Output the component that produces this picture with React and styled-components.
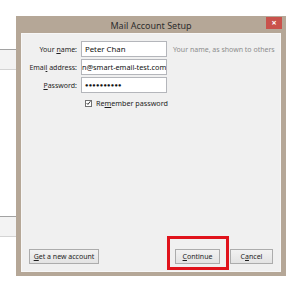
import React from "react";
import styled, { createGlobalStyle } from "styled-components";

const GlobalStyle = createGlobalStyle`
  html, body {
    margin: 0;
    padding: 0;
    background: #ffffff;
  }
  body {
    font-family: "Noto Sans", "Open Sans", sans-serif;
  }
`;

const Page = styled.div`
  width: 300px;
  height: 291px;
  display: flex;
  padding-top: 16px;
  box-sizing: border-box;
  overflow: hidden;
`;

const Behind = styled.div`
  width: 16px;
  display: flex;
  flex-direction: column;
  padding-top: 33px;
  gap: 146px;
`;

const RemnantField = styled.div`
  height: 21px;
  box-sizing: border-box;
  border-top: 1px solid #a2a2a2;
  border-bottom: 1px solid #d4d4d4;
  background: #f3f3f3;
`;

const Window = styled.div`
  width: 270px;
  height: 260px;
  box-sizing: border-box;
  background: #b5a797;
  padding: 0 5px 4px;
  display: flex;
  flex-direction: column;
`;

const TitleBar = styled.div`
  height: 17px;
  display: grid;
  grid-template-columns: 1fr auto 1fr;
  align-items: center;
`;

const Title = styled.div`
  grid-column: 2;
  font-size: 9px;
  color: #2e2e2e;
  padding-top: 1px;
`;

const CloseButton = styled.div`
  grid-column: 3;
  justify-self: end;
  align-self: start;
  margin-top: 1px;
  margin-right: -1px;
  width: 16px;
  height: 12px;
  background: #c9524c;
  color: #ffffff;
  font-size: 9px;
  font-weight: bold;
  line-height: 12px;
  text-align: center;
`;

const Content = styled.div`
  flex: 1;
  background: #f0f0f0;
  border: 1px solid #f7f7f7;
  box-sizing: border-box;
  padding: 7px 7px 7px;
  display: flex;
  flex-direction: column;
  justify-content: space-between;
`;

const Form = styled.div`
  display: grid;
  grid-template-columns: 48px 86px auto;
  grid-auto-rows: 16px;
  row-gap: 2px;
  column-gap: 4px;
  align-items: center;
`;

const Label = styled.div`
  font-size: 7px;
  color: #1e1e1e;
  text-align: right;
  white-space: nowrap;
`;

const Key = styled.span`
  text-decoration: underline;
`;

const Field = styled.div`
  height: 16px;
  box-sizing: border-box;
  background: #ffffff;
  border: 1px solid #b4b6bb;
  display: flex;
  align-items: center;
  padding: 0 3px;
  overflow: hidden;
  font-size: ${(p) => (p.$secret ? "5.6px" : "7.8px")};
  letter-spacing: ${(p) => (p.$secret ? "0.3px" : "0")};
  color: #111;
  white-space: nowrap;
`;

const Scrolled = styled.span`
  margin-left: -3px;
  font-size: 7.3px;
`;

const Hint = styled.div`
  padding-left: 2px;
  font-size: 7px;
  color: #8c8c8c;
  white-space: nowrap;
`;

const CheckRow = styled.label`
  grid-column: 2 / span 2;
  display: flex;
  align-items: center;
  gap: 4px;
  height: 13px;
  padding-left: 4px;
  font-size: 7.2px;
  color: #1e1e1e;
  white-space: nowrap;
`;

const Box = styled.span`
  width: 7px;
  height: 7px;
  box-sizing: border-box;
  border: 1px solid #707070;
  background: #fff;
  display: flex;
  align-items: center;
  justify-content: center;
`;

const ButtonBar = styled.div`
  display: flex;
  align-items: center;
`;

const Button = styled.div`
  height: 15px;
  box-sizing: border-box;
  width: ${(p) => p.$width}px;
  margin-left: ${(p) => p.$gap || 0}px;
  border: 1px solid #acacac;
  background: linear-gradient(#f2f2f2, #e3e3e3);
  font-size: 7px;
  color: #1e1e1e;
  display: flex;
  align-items: center;
  justify-content: center;
  white-space: nowrap;
`;

const Spacer = styled.div`
  flex: 1;
`;

const Marked = styled.div`
  position: relative;
`;

const Highlight = styled.div`
  position: absolute;
  left: -8px;
  top: -13px;
  width: 62px;
  height: 34px;
  box-sizing: border-box;
  border: 3px solid #e0131b;
  pointer-events: none;
`;

export default function App() {
  return (
    <>
      <GlobalStyle />
      <Page>
        <Behind>
          <RemnantField />
          <RemnantField />
        </Behind>
        <Window>
          <TitleBar>
            <Title>Mail Account Setup</Title>
            <CloseButton>×</CloseButton>
          </TitleBar>
          <Content>
            <Form>
              <Label>
                Your <Key>n</Key>ame:
              </Label>
              <Field>Peter Chan</Field>
              <Hint>Your name, as shown to others</Hint>

              <Label>
                Emai<Key>l</Key> address:
              </Label>
              <Field>
                <Scrolled>n@smart-email-test.com</Scrolled>
              </Field>
              <div />

              <Label>
                <Key>P</Key>assword:
              </Label>
              <Field $secret>●●●●●●●●●●</Field>
              <div />

              <CheckRow>
                <Box>
                  <svg width="6" height="6" viewBox="0 0 6 6">
                    <path
                      d="M0.8 3.1 L2.3 4.7 L5.3 0.9"
                      fill="none"
                      stroke="#222"
                      strokeWidth="1.1"
                    />
                  </svg>
                </Box>
                <span>
                  Re<Key>m</Key>ember password
                </span>
              </CheckRow>
            </Form>

            <ButtonBar>
              <Button $width={70}>
                <Key>G</Key>et a new account
              </Button>
              <Spacer />
              <Marked>
                <Button $width={45}>
                  <Key>C</Key>ontinue
                </Button>
                <Highlight />
              </Marked>
              <Button $width={43} $gap={10}>
                C<Key>a</Key>ncel
              </Button>
            </ButtonBar>
          </Content>
        </Window>
      </Page>
    </>
  );
}
